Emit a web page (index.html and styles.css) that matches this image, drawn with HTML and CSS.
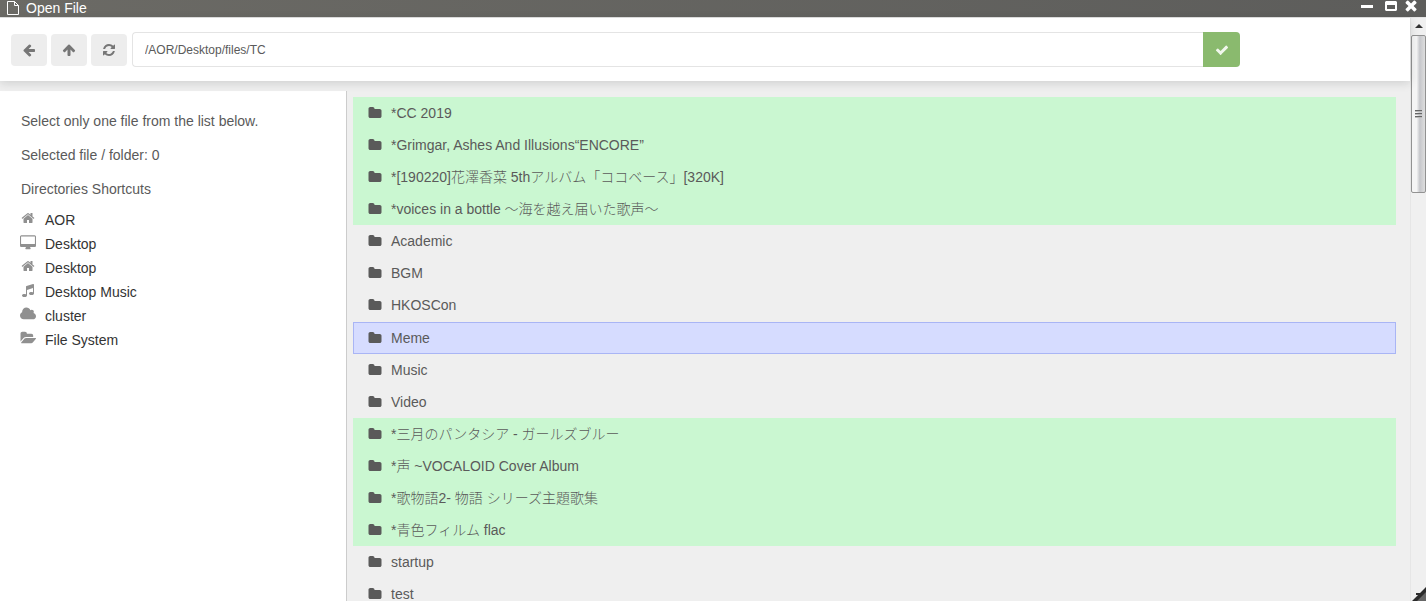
FILE: index.html
```html
<!DOCTYPE html>
<html lang="en">
<head>
<meta charset="utf-8">
<title>Open File</title>
<link rel="stylesheet" href="styles.css">
</head>
<body>
<svg class="sprite" aria-hidden="true">
  <symbol id="folder" viewBox="64 0 1664 1792"><path d="M1728 608v704q0 92-66 158t-158 66h-1216q-92 0-158-66t-66-158v-960q0-92 66-158t158-66h320q92 0 158 66t66 158v32h672q92 0 158 66t66 158z"/></symbol>
  <symbol id="home" viewBox="-128 -64 2048 1920"><path d="M1472 992v480q0 26-19 45t-45 19h-384v-384h-256v384h-384q-26 0-45-19t-19-45v-480q0-1 .5-3t.5-3l575-474 575 474q1 2 1 6zm223-69l-62 74q-8 9-21 11h-3q-13 0-21-7l-692-577-692 577q-12 8-24 7-13-2-21-11l-62-74q-8-10-7-23.5t11-21.5l719-599q32-26 76-26t76 26l244 204v-195q0-14 9-23t23-9h192q14 0 23 9t9 23v408l219 182q10 8 11 21.5t-7 23.5z"/></symbol>
  <symbol id="desktop" viewBox="64 -100 1920 1792"><path d="M1856 992v-832q0-13-9.500-22.500t-22.500-9.500h-1600q-13 0-22.500 9.500t-9.500 22.500v832q0 13 9.500 22.500t22.500 9.500h1600q13 0 22.500-9.500t9.500-22.500zm128-832v1088q0 66-47 113t-113 47h-544q0 37 16 77.500t32 71 16 43.500q0 26-19 45t-45 19h-512q-26 0-45-19t-19-45q0-14 16-44t32-70 16-78h-544q-66 0-113-47t-47-113v-1088q0-66 47-113t113-47h1600q66 0 113 47t47 113z"/></symbol>
  <symbol id="music" viewBox="-128 -64 2048 1920"><path d="M1664 224v1120q0 50-34 89t-86 60.500-103.500 32-96.500 10.500-96.500-10.500-103.500-32-86-60.500-34-89 34-89 86-60.500 103.500-32 96.500-10.500q105 0 192 39v-537l-768 237v709q0 50-34 89t-86 60.500-103.500 32-96.500 10.500-96.500-10.500-103.500-32-86-60.500-34-89 34-89 86-60.500 103.500-32 96.500-10.500q105 0 192 39v-967q0-31 19-56.500t49-35.500l832-256q12-4 28-4 40 0 68 28t28 68z"/></symbol>
  <symbol id="cloud" viewBox="64 0 1920 1792"><path d="M1984 1152q0 159-112.500 271.500t-271.500 112.500h-1088q-185 0-316.500-131.500t-131.500-316.500q0-132 71-241.500t187-163.500q-2-28-2-43 0-212 150-362t362-150q158 0 286.500 88t187.500 230q70-62 166-62 106 0 181 75t75 181q0 75-41 138 129 30 213 134.500t84 239.500z"/></symbol>
  <symbol id="folder-open" viewBox="0 0 1943 1792"><path d="M1943 952q0 31-31 66l-336 396q-43 51-120.500 86.500t-143.500 35.500h-1088q-34 0-60.500-13t-26.500-43q0-31 31-66l336-396q43-51 120.500-86.500t143.500-35.500h1088q34 0 60.500 13t26.500 43zm-343-344v160h-832q-94 0-197 47.500t-164 119.500l-337 396-5 6q0-4-.5-12.500t-.5-12.500v-960q0-92 66-158t158-66h320q92 0 158 66t66 158v32h544q92 0 158 66t66 158z"/></symbol>
  <symbol id="arrow-left" viewBox="0 0 1792 1792"><path d="M1664 896v128q0 53-32.500 90.500t-84.500 37.500h-704l293 294q38 36 38 90t-38 90l-75 76q-37 37-90 37-52 0-91-37l-651-652q-37-37-37-90 0-52 37-91l651-650q38-38 91-38 52 0 90 38l75 74q38 38 38 91t-38 91l-293 293h704q52 0 84.500 37.500t32.500 90.500z"/></symbol>
  <symbol id="arrow-up" viewBox="0 0 1792 1792"><path d="M1675 971q0 51-37 90l-75 75q-38 38-91 38-54 0-90-38l-294-293v704q0 52-37.500 84.500t-90.500 32.500h-128q-53 0-90.500-32.500t-37.500-84.500v-704l-294 293q-36 38-90 38t-90-38l-75-75q-38-38-38-90 0-53 38-91l651-651q35-37 90-37 54 0 91 37l651 651q37 39 37 91z"/></symbol>
  <symbol id="refresh" viewBox="0 0 1792 1792"><path d="M1639 1056q0 5-1 7-64 268-268 434.500t-478 166.500q-146 0-282.500-55t-243.500-157l-129 129q-19 19-45 19t-45-19-19-45v-448q0-26 19-45t45-19h448q26 0 45 19t19 45-19 45l-137 137q71 66 161 102t187 36q134 0 250-65t186-179q11-17 53-117 8-23 30-23h192q13 0 22.500 9.500t9.500 22.500zm25-800v448q0 26-19 45t-45 19h-448q-26 0-45-19t-19-45 19-45l138-138q-148-137-349-137-134 0-250 65t-186 179q-11 17-53 117-8 23-30 23h-199q-13 0-22.500-9.500t-9.500-22.500v-7q65-268 270-434.500t480-166.500q146 0 284 55.500t245 156.500l130-129q19-19 45-19t45 19 19 45z"/></symbol>
  <symbol id="check" viewBox="0 0 1792 1792"><path d="M1671 566q0 40-28 68l-724 724-136 136q-28 28-68 28t-68-28l-136-136-362-362q-28-28-28-68t28-68l136-136q28-28 68-28t68 28l294 295 656-657q28-28 68-28t68 28l136 136q28 28 28 68z"/></symbol>
  <symbol id="times" viewBox="240 300 1300 1300"><path d="M1490 1322q0 40-28 68l-136 136q-28 28-68 28t-68-28l-294-294-294 294q-28 28-68 28t-68-28l-136-136q-28-28-28-68t28-68l294-294-294-294q-28-28-28-68t28-68l136-136q28-28 68-28t68 28l294 294 294-294q28-28 68-28t68 28l136 136q28 28 28 68t-28 68l-294 294 294 294q28 28 28 68z"/></symbol>
</svg>
<header class="titlebar">
  <svg class="title-icon" viewBox="0 0 14 16" aria-hidden="true"><path d="M1.500 1.500h7l4 4v9h-11zM8.500 1.500v4h4"/></svg>
  <h1 class="title">Open File</h1>
  <div class="window-controls">
    <button type="button" aria-label="Minimize"><svg viewBox="0 0 12 12"><path d="M0 5h12v3H0z"/></svg></button>
    <button type="button" aria-label="Maximize"><svg viewBox="0 0 12 12"><path fill-rule="evenodd" d="M1 1h10l1 1v8l-1 1H1l-1-1V2zM2 5v4h8V5z"/></svg></button>
    <button type="button" aria-label="Close"><svg><use href="#times"/></svg></button>
  </div>
</header>
<div class="frame">
  <div class="content">
    <form class="toolbar">
      <div class="tools">
        <button class="tool" type="button" aria-label="Back"><svg class="icon"><use href="#arrow-left"/></svg></button>
        <button class="tool" type="button" aria-label="Parent folder"><svg class="icon"><use href="#arrow-up"/></svg></button>
        <button class="tool" type="button" aria-label="Refresh"><svg class="icon"><use href="#refresh"/></svg></button>
      </div>
      <div class="path-group">
        <input class="path" type="text" aria-label="Path" value="/AOR/Desktop/files/TC">
        <button class="confirm" type="button" aria-label="Confirm"><svg class="icon"><use href="#check"/></svg></button>
      </div>
    </form>
    <div class="panes">
      <aside class="sidebar">
        <p>Select only one file from the list below.</p>
        <p>Selected file / folder: 0</p>
        <p>Directories Shortcuts</p>
        <nav class="shortcuts" aria-label="Directories Shortcuts">
          <a href="#aor"><svg class="icon"><use href="#home"/></svg>AOR</a>
          <a href="#desktop-1"><svg class="icon"><use href="#desktop"/></svg>Desktop</a>
          <a href="#desktop-2"><svg class="icon"><use href="#home"/></svg>Desktop</a>
          <a href="#desktop-music"><svg class="icon"><use href="#music"/></svg>Desktop Music</a>
          <a href="#cluster"><svg class="icon"><use href="#cloud"/></svg>cluster</a>
          <a href="#file-system"><svg class="icon"><use href="#folder-open"/></svg>File System</a>
        </nav>
      </aside>
      <main class="files">
        <button type="button" class="row marked"><svg class="icon"><use href="#folder"/></svg>*CC 2019</button>
        <button type="button" class="row marked"><svg class="icon"><use href="#folder"/></svg>*Grimgar, Ashes And Illusions“ENCORE”</button>
        <button type="button" class="row marked" lang="ja"><svg class="icon"><use href="#folder"/></svg>*[190220]花澤香菜 5thアルバム「ココベース」[320K]</button>
        <button type="button" class="row marked" lang="ja"><svg class="icon"><use href="#folder"/></svg>*voices in a bottle ～海を越え届いた歌声～</button>
        <button type="button" class="row"><svg class="icon"><use href="#folder"/></svg>Academic</button>
        <button type="button" class="row"><svg class="icon"><use href="#folder"/></svg>BGM</button>
        <button type="button" class="row"><svg class="icon"><use href="#folder"/></svg>HKOSCon</button>
        <button type="button" class="row selected"><svg class="icon"><use href="#folder"/></svg>Meme</button>
        <button type="button" class="row"><svg class="icon"><use href="#folder"/></svg>Music</button>
        <button type="button" class="row"><svg class="icon"><use href="#folder"/></svg>Video</button>
        <button type="button" class="row marked" lang="ja"><svg class="icon"><use href="#folder"/></svg>*三月のパンタシア - ガールズブルー</button>
        <button type="button" class="row marked" lang="ja"><svg class="icon"><use href="#folder"/></svg>*声 ~VOCALOID Cover Album</button>
        <button type="button" class="row marked" lang="ja"><svg class="icon"><use href="#folder"/></svg>*歌物語2- 物語 シリーズ主題歌集</button>
        <button type="button" class="row marked" lang="ja"><svg class="icon"><use href="#folder"/></svg>*青色フィルム flac</button>
        <button type="button" class="row"><svg class="icon"><use href="#folder"/></svg>startup</button>
        <button type="button" class="row"><svg class="icon"><use href="#folder"/></svg>test</button>
      </main>
    </div>
  </div>
  <div class="scrollbar" aria-hidden="true">
    <svg class="scroll-up" viewBox="0 0 15 17"><path d="M4 10l4-4 4 4z"/></svg>
    <div class="thumb"><i></i><i></i><i></i></div>
    <svg class="grip" viewBox="0 0 14 14"><path d="M14 1v13H1z" fill="#666"/><path d="M14 0v5L5 14H0zM4 6h4v2H4z" fill="#2b2b2b"/></svg>
  </div>
</div>
</body>
</html>
```
FILE: styles.css
```css
* { box-sizing: border-box; }
body {
  margin: 0;
  height: 100vh;
  display: flex;
  flex-direction: column;
  overflow: hidden;
  background: #efefef;
  color: #5a5a5a;
  font: 14px/20px "Liberation Sans", Arial, "Noto Sans CJK JP", sans-serif;
}
button, input { font: inherit; color: inherit; }
button { padding: 0; border: 0; background: none; }
svg { display: block; fill: currentColor; flex: none; }
.sprite { position: absolute; width: 0; height: 0; }
.icon { width: 14px; height: 14px; }

.titlebar {
  flex: none;
  height: 17px;
  padding: 0 9px 2px 6px;
  display: flex;
  align-items: center;
  gap: 6px;
  background: linear-gradient(90deg, #6b6a65, #5d5d5b);
  color: #fff;
}
.title-icon { width: 14px; height: 16px; fill: none; stroke: currentColor; }
.title { margin: 0; flex: 1; font-size: 14px; font-weight: 400; line-height: 16px; }
.window-controls { display: flex; gap: 12px; padding-bottom: 3px; }
.window-controls svg { width: 12px; height: 12px; }
.window-controls button:last-child { margin-left: -4px; }

.frame { flex: 1; min-height: 0; display: flex; border-top: 1px solid #e4e4e4; }
.content { flex: 1; min-width: 0; display: flex; flex-direction: column; }
.toolbar {
  flex: none;
  display: flex;
  align-items: center;
  gap: 5px;
  padding: 14px 170px 14px 11px;
  background: #fff;
  box-shadow: 0 2px 9px rgba(34, 36, 38, 0.16);
  z-index: 1;
}
.tools { display: flex; gap: 4px; }
.tool {
  display: grid;
  place-items: center;
  width: 36px;
  height: 32px;
  border-radius: 4px;
  background: #ededed;
  color: #767676;
}
.path-group { flex: 1; display: flex; }
.path {
  flex: 1;
  min-width: 0;
  height: 35px;
  padding: 0 12px;
  border: 1px solid #e4e4e4;
  border-right: 0;
  border-radius: 4px 0 0 4px;
  background: #fff;
  font-size: 12px;
}
.confirm {
  display: grid;
  place-items: center;
  width: 37px;
  border-radius: 0 4px 4px 0;
  background: #8aba6e;
  color: #f1f7ed;
}

.panes { flex: 1; min-height: 0; display: flex; }
.sidebar {
  width: 347px;
  flex: none;
  margin-top: 10px;
  padding: 20px 20px 0;
  background: #fff;
  border-right: 1px solid #ccc;
}
.sidebar p { margin: 0 1px 14px; }
.sidebar p:last-of-type { margin-bottom: 9px; }
.shortcuts { display: flex; flex-direction: column; }
.shortcuts a {
  display: flex;
  align-items: center;
  gap: 9px;
  height: 24px;
  color: #333;
  text-decoration: none;
}
.shortcuts .icon { width: 16px; height: 16px; margin-bottom: 4px; color: #909090; }
.files {
  flex: 1;
  min-width: 0;
  display: flex;
  flex-direction: column;
  padding: 16px 14px 0 6px;
}
.row {
  flex: none;
  display: flex;
  align-items: center;
  gap: 9px;
  height: 32px;
  padding: 0 14px;
  border: 1px solid transparent;
  font-weight: 300;
  text-align: left;
  white-space: nowrap;
}
.marked { background: #caf7d1; border-color: #caf7d1; }
.selected { margin-top: 1px; background: #d6dcff; border-color: #a9b5f5; }

.scrollbar {
  position: relative;
  flex: none;
  width: 16px;
  background: #f0f0f0;
  border-left: 1px solid #e6e6e6;
}
.scroll-up { width: 15px; height: 17px; fill: #333; }
.thumb {
  height: 158px;
  display: flex;
  flex-direction: column;
  align-items: center;
  justify-content: center;
  gap: 1px;
  border: 1px solid #929292;
  border-radius: 2px;
  background: linear-gradient(90deg, #f5f5f5 0 35%, #c6c7cb 60%, #dedede);
}
.thumb i { width: 7px; height: 2px; background: #666; border-bottom: 1px solid #bbb; }
.grip { position: absolute; right: 0; bottom: 0; width: 14px; height: 14px; }
```
